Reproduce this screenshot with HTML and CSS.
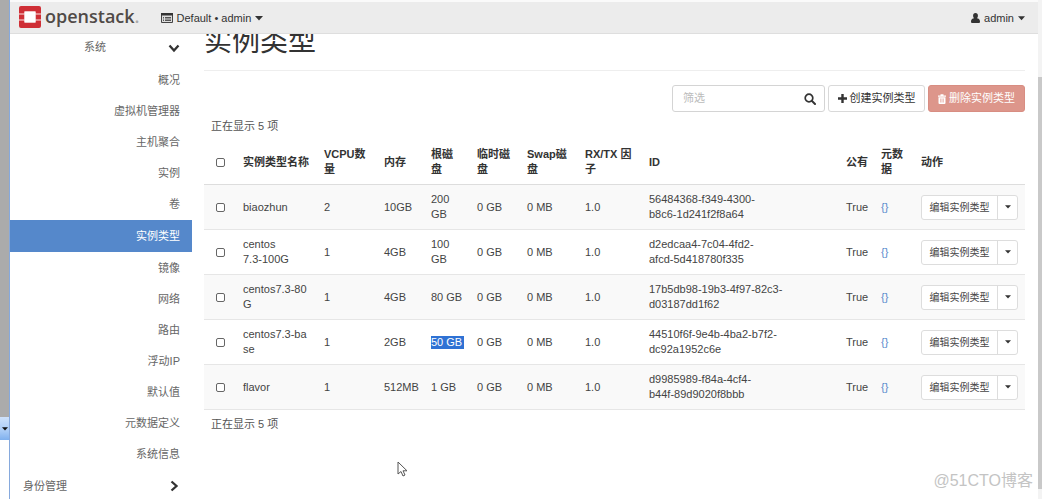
FILE: index.html
```html
<!DOCTYPE html>
<html lang="zh-CN">
<head>
<meta charset="utf-8">
<title>实例类型 - OpenStack Dashboard</title>
<link rel="stylesheet" href="styles.css">
</head>
<body>
<svg class="sprite" aria-hidden="true">
  <symbol id="caret" viewBox="0 0 8 5"><path d="M0 0h8L4 4.6z" fill="currentColor"/></symbol>
  <symbol id="chevron" viewBox="0 0 12 12"><path d="M1.5 3.5 6 8.5l4.500-5" fill="none" stroke="currentColor" stroke-width="2.300"/></symbol>
</svg>
<div class="desktop-edge"><div class="edge-top"></div><div class="edge-tab"><svg width="6" height="4"><use href="#caret"/></svg></div></div>
<div class="app">
  <header class="topbar">
    <a class="brand" href="#">
      <svg width="22" height="22" viewBox="0 0 22 22" aria-hidden="true">
        <path fill="#cf2f36" d="M2 0h18q2 0 2 2v5h-5.500V5.500h-11V7H0V2q0-2 2-2zM0 8.500h5.500v5H0zM16.500 8.500H22v5h-5.500zM0 15h5.500v1.500h11V15H22v5q0 2-2 2H2q-2 0-2-2z"/>
        <path fill="#e9898c" d="M0 7h5.500v1.500H0zM16.500 7H22v1.500h-5.500zM0 13.500h5.500V15H0zM16.500 13.500H22V15h-5.500z"/>
        <path fill="#fff" d="M5.500 5.500h11v11h-11z"/>
      </svg>
      <span class="wordmark">openstack<span class="mark-dot">.</span></span>
    </a>
    <button class="menu project" type="button">
      <svg width="12" height="10" viewBox="0 0 12 10" aria-hidden="true"><path d="M.5.5h11v9H.5z" fill="#ddd" stroke="#444"/><path d="M0 0h12v2.500H0z" fill="#333"/><path d="M2 4.500h1M4 4.500h6M2 6h1M4 6h6M2 7.500h1M4 7.500h6" stroke="#555"/></svg>
      <span>Default • admin</span>
      <svg width="8" height="5" aria-hidden="true"><use href="#caret"/></svg>
    </button>
    <button class="menu user" type="button">
      <svg width="9" height="10" viewBox="0 0 9 10" aria-hidden="true"><path fill="currentColor" d="M4.500 0a2.400 2.700 0 0 1 2.400 2.800c0 1-.4 1.900-1 2.400C7.800 5.300 9 6.500 9 8.500 9 9.500 8.500 10 7.500 10h-6C.5 10 0 9.500 0 8.500c0-2 1.200-3.200 3.100-3.300-.6-.5-1-1.400-1-2.400A2.400 2.700 0 0 1 4.500 0z"/></svg>
      <span>admin</span>
      <svg width="7" height="5" aria-hidden="true"><use href="#caret"/></svg>
    </button>
  </header>
  <div class="body">
    <nav class="sidebar">
      <button class="group sub" type="button"><span>系统</span><svg width="12" height="12" aria-hidden="true"><use href="#chevron"/></svg></button>
      <ul class="links">
        <li><a href="#">概况</a></li>
        <li><a href="#">虚拟机管理器</a></li>
        <li><a href="#">主机聚合</a></li>
        <li><a href="#">实例</a></li>
        <li><a href="#">卷</a></li>
        <li><a class="active" href="#" aria-current="page">实例类型</a></li>
        <li><a href="#">镜像</a></li>
        <li><a href="#">网络</a></li>
        <li><a href="#">路由</a></li>
        <li><a href="#">浮动IP</a></li>
        <li><a href="#">默认值</a></li>
        <li><a href="#">元数据定义</a></li>
        <li><a href="#">系统信息</a></li>
      </ul>
      <button class="group" type="button"><span>身份管理</span><svg class="closed" width="12" height="12" aria-hidden="true"><use href="#chevron"/></svg></button>
    </nav>
    <main class="content">
      <h1>实例类型</h1>
      <div class="actions">
        <div class="search">
          <input type="text" placeholder="筛选" aria-label="筛选">
          <svg width="12" height="12" viewBox="0 0 12 12" aria-hidden="true"><circle cx="5" cy="5" r="3.800" fill="none" stroke="currentColor" stroke-width="1.700"/><path d="m8 8 3 3" stroke="currentColor" stroke-width="2" stroke-linecap="round"/></svg>
        </div>
        <button class="btn" type="button"><svg width="9" height="9" viewBox="0 0 9 9" aria-hidden="true"><path d="M4.500 0v9M0 4.500h9" stroke="currentColor" stroke-width="2.400"/></svg><span>创建实例类型</span></button>
        <button class="btn danger" type="button"><svg width="8" height="10" viewBox="0 0 8 10" aria-hidden="true"><path fill="currentColor" d="M0 1.500h2.500V.3h3v1.200H8v1.200H0zM.5 3.300h7V9q0 1-1 1h-5q-1 0-1-1z"/><path d="M2.600 4.500v4M4 4.500v4M5.400 4.500v4" stroke="#dd968b" stroke-width=".6"/></svg><span>删除实例类型</span></button>
      </div>
      <p class="count">正在显示 5 项</p>
      <table>
        <colgroup><col class="c-check"><col class="c-name"><col class="c-cpu"><col class="c-ram"><col class="c-root"><col class="c-temp"><col class="c-swap"><col class="c-rx"><col><col class="c-public"><col class="c-meta"><col class="c-act"></colgroup>
        <thead>
          <tr><th class="check"><input type="checkbox" aria-label="全选"></th><th>实例类型名称</th><th>VCPU数量</th><th>内存</th><th>根磁盘</th><th>临时磁盘</th><th>Swap磁盘</th><th>RX/TX 因子</th><th>ID</th><th class="tight">公有</th><th>元数据</th><th>动作</th></tr>
        </thead>
        <tbody>
          <tr><td class="check"><input type="checkbox" aria-label="biaozhun"></td><td>biaozhun</td><td>2</td><td>10GB</td><td>200 GB</td><td>0 GB</td><td>0 MB</td><td>1.0</td><td>56484368-f349-4300-<br>b8c6-1d241f2f8a64</td><td class="tight">True</td><td><a href="#">{}</a></td><td><div class="split"><button type="button">编辑实例类型</button><button type="button" aria-label="更多"><svg width="6" height="4"><use href="#caret"/></svg></button></div></td></tr>
          <tr><td class="check"><input type="checkbox" aria-label="centos 7.3-100G"></td><td>centos<br>7.3-100G</td><td>1</td><td>4GB</td><td>100 GB</td><td>0 GB</td><td>0 MB</td><td>1.0</td><td>d2edcaa4-7c04-4fd2-<br>afcd-5d418780f335</td><td class="tight">True</td><td><a href="#">{}</a></td><td><div class="split"><button type="button">编辑实例类型</button><button type="button" aria-label="更多"><svg width="6" height="4"><use href="#caret"/></svg></button></div></td></tr>
          <tr><td class="check"><input type="checkbox" aria-label="centos7.3-80G"></td><td>centos7.3-80<br>G</td><td>1</td><td>4GB</td><td class="tight">80 GB</td><td>0 GB</td><td>0 MB</td><td>1.0</td><td>17b5db98-19b3-4f97-82c3-<br>d03187dd1f62</td><td class="tight">True</td><td><a href="#">{}</a></td><td><div class="split"><button type="button">编辑实例类型</button><button type="button" aria-label="更多"><svg width="6" height="4"><use href="#caret"/></svg></button></div></td></tr>
          <tr><td class="check"><input type="checkbox" aria-label="centos7.3-base"></td><td>centos7.3-ba<br>se</td><td>1</td><td>2GB</td><td class="tight"><span class="selected">50 GB</span></td><td>0 GB</td><td>0 MB</td><td>1.0</td><td>44510f6f-9e4b-4ba2-b7f2-<br>dc92a1952c6e</td><td class="tight">True</td><td><a href="#">{}</a></td><td><div class="split"><button type="button">编辑实例类型</button><button type="button" aria-label="更多"><svg width="6" height="4"><use href="#caret"/></svg></button></div></td></tr>
          <tr><td class="check"><input type="checkbox" aria-label="flavor"></td><td>flavor</td><td>1</td><td>512MB</td><td>1 GB</td><td>0 GB</td><td>0 MB</td><td>1.0</td><td>d9985989-f84a-4cf4-<br>b44f-89d9020f8bbb</td><td class="tight">True</td><td><a href="#">{}</a></td><td><div class="split"><button type="button">编辑实例类型</button><button type="button" aria-label="更多"><svg width="6" height="4"><use href="#caret"/></svg></button></div></td></tr>
        </tbody>
      </table>
      <p class="count">正在显示 5 项</p>
    </main>
  </div>
</div>
<div class="scrollbar"><div class="thumb"></div></div>
<svg class="pointer" width="11" height="16" viewBox="0 0 11 16" aria-hidden="true"><path d="M1 1v12l3-2.500L6 15l2-1-2-4.200h4z" fill="#fff" stroke="#555"/></svg>
<div class="watermark">@51CTO博客</div>
</body>
</html>
```
FILE: styles.css
```css
* { box-sizing: border-box; }

body {
  margin: 0;
  height: 100vh;
  overflow: hidden;
  position: relative;
  display: flex;
  background: #fff;
  color: #444;
  font: 11px/15px "Liberation Sans", "Noto Sans CJK SC", sans-serif;
}

button, input { font: inherit; color: inherit; }
button { margin: 0; padding: 0; border: 0; background: none; }
a { color: inherit; text-decoration: none; }
svg { display: block; flex: none; }
.sprite { position: absolute; width: 0; height: 0; }

.desktop-edge {
  flex: none;
  width: 10px;
  display: flex;
  flex-direction: column;
  border-right: 1px solid #86a9dd;
}
.edge-top { height: 417px; background: #ababab; }
.edge-tab {
  height: 23px;
  display: flex;
  align-items: center;
  justify-content: center;
  background: linear-gradient(#cfe2fb, #a9cbf6 60%, #7fb0ee);
  color: #111;
}

.app { flex: 1; min-width: 0; display: flex; flex-direction: column; }

.topbar {
  flex: none;
  position: relative;
  z-index: 1;
  height: 34px;
  display: flex;
  align-items: center;
  padding: 1px 13px 0 9px;
  background: #ececec;
  border-top: 2px solid #fafafa;
  border-bottom: 1px solid #dedede;
  color: #333;
}
.brand { display: flex; align-items: center; gap: 4px; height: 26px; margin-bottom: 2px; }
.wordmark { font: 600 18px/22px "Open Sans", sans-serif; color: #504a47; margin-bottom: 2px; }
.mark-dot { color: #aaa; }
.menu { display: flex; align-items: center; gap: 4px; }
.project { margin-left: 21px; }
.user { margin-left: auto; }

.body { flex: 1; min-height: 0; display: flex; }

.sidebar { flex: none; width: 182px; }
.group {
  width: 100%;
  height: 30px;
  display: flex;
  align-items: center;
  justify-content: space-between;
  padding: 0 12px 0 13px;
  color: #666;
}
.group svg { color: #333; }
.group .closed { transform: rotate(-90deg); }
.sub { padding-left: 74px; height: 27px; }
.links { list-style: none; margin: 3px 0 2px; padding: 0; color: #666; text-align: right; }
.links a { display: block; padding: 9px 12px 7px; }
.links .active { margin-top: 1px; padding-bottom: 8px; background: #5588cb; color: #fff; }

.content { flex: 1; min-width: 0; padding: 0 13px 0 12px; }
h1 {
  margin: -12px 0 14px;
  padding-bottom: 8px;
  border-bottom: 1px solid #eee;
  font-size: 28px;
  line-height: 40px;
  font-weight: 400;
  color: #333;
}
.actions { display: flex; justify-content: flex-end; gap: 3px; }
.search {
  width: 153px;
  height: 27px;
  display: flex;
  align-items: center;
  padding: 0 8px 0 10px;
  border: 1px solid #d4d4d4;
  border-radius: 3px;
  color: #333;
}
.search input { flex: 1; min-width: 0; padding: 0; border: 0; outline: 0; background: none; }
.search input::placeholder { color: #bbb; }
.btn {
  width: 97px;
  height: 27px;
  display: flex;
  align-items: center;
  justify-content: center;
  gap: 3px;
  border: 1px solid #d9d9d9;
  border-radius: 3px;
  color: #333;
}
.danger { background: #dd968b; border-color: #d88d82; color: #fff; }

.count { margin: 7px 0 6px; padding-left: 7px; color: #555; }

table { width: 100%; border-collapse: separate; border-spacing: 0; table-layout: fixed; }
th, td { padding: 7px; text-align: left; vertical-align: middle; }
th { color: #333; border-bottom: 1px solid #ddd; }
td { border-bottom: 1px solid #e6e6e6; }
tbody tr:nth-child(odd) { background: #f9f9f9; }
td a { color: #5588cb; }
.check { padding: 0; }
.check input {
  appearance: none;
  display: block;
  width: 9px;
  height: 9px;
  margin: 0 auto;
  border: 1px solid #666;
  border-radius: 2px;
  background: #fff;
}
.tight { padding-right: 0; white-space: nowrap; }
.selected { display: inline-block; padding-right: 2px; line-height: 13px; background: #2f72d4; color: #fff; }

.c-check { width: 32px; }
.c-name { width: 81px; }
.c-cpu { width: 60px; }
.c-ram { width: 47px; }
.c-root { width: 46px; }
.c-temp { width: 50px; }
.c-swap { width: 58px; }
.c-rx { width: 64px; }
.c-public { width: 35px; }
.c-meta { width: 40px; }
.c-act { width: 111px; }

.split {
  height: 25px;
  display: flex;
  border: 1px solid #ddd;
  border-radius: 3px;
  background: #fff;
  font-size: 10px;
}
.split button { flex: 1; display: flex; align-items: center; justify-content: center; }
.split button + button { flex: none; width: 20px; border-left: 1px solid #ddd; color: #333; }
td:last-child { padding-top: 0; padding-bottom: 0; }

.scrollbar { flex: none; width: 4px; padding-top: 77px; background: #f3f3f3; }
.thumb { height: 412px; background: #c9c9c9; }

.pointer { position: absolute; left: 397px; top: 461px; }
.watermark { position: absolute; right: 9px; bottom: 8px; font-size: 16px; line-height: 20px; color: #c4c4c4; }
```
